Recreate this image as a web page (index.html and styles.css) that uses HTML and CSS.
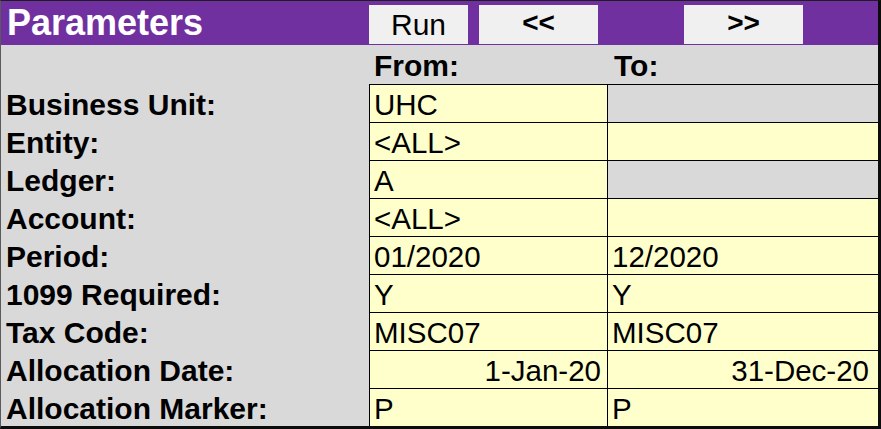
FILE: index.html
```html
<!DOCTYPE html>
<html>
<head>
<meta charset="utf-8">
<link rel="stylesheet" href="styles.css">
</head>
<body>
<div class="sheet">
  <div class="titlebar">
    <div class="title">Parameters</div>
    <button class="btn btn-run">Run</button>
    <button class="btn btn-nav btn-prev">&lt;&lt;</button>
    <button class="btn btn-nav btn-next">&gt;&gt;</button>
  </div>
  <div class="grid">
    <div class="label"></div>
    <div class="colhead colhead-from">From:</div>
    <div class="colhead colhead-to">To:</div>

    <div class="label">Business Unit:</div>
    <div class="cell from">UHC</div>
    <div class="cell to off"></div>

    <div class="label">Entity:</div>
    <div class="cell from">&lt;ALL&gt;</div>
    <div class="cell to"></div>

    <div class="label">Ledger:</div>
    <div class="cell from">A</div>
    <div class="cell to off"></div>

    <div class="label">Account:</div>
    <div class="cell from">&lt;ALL&gt;</div>
    <div class="cell to"></div>

    <div class="label">Period:</div>
    <div class="cell from">01/2020</div>
    <div class="cell to">12/2020</div>

    <div class="label">1099 Required:</div>
    <div class="cell from">Y</div>
    <div class="cell to">Y</div>

    <div class="label">Tax Code:</div>
    <div class="cell from">MISC07</div>
    <div class="cell to">MISC07</div>

    <div class="label">Allocation Date:</div>
    <div class="cell from num">1-Jan-20</div>
    <div class="cell to num">31-Dec-20</div>

    <div class="label">Allocation Marker:</div>
    <div class="cell from">P</div>
    <div class="cell to">P</div>
  </div>
</div>
</body>
</html>
```

FILE: styles.css
```css
html, body {
  margin: 0;
  padding: 0;
  background: #ffffff;
}

body {
  font-family: "Liberation Sans", Arial, sans-serif;
  color: #000;
}

.sheet {
  width: 877px;
  height: 425px;
  border-top: 1px solid #1e1e1e;
  border-left: 1px solid #5a5a5a;
  border-right: 3px solid #0c0c0c;
  border-bottom: 3px solid #0c0c0c;
  background: #d9d9d9;
  overflow: hidden;
}

.titlebar {
  display: flex;
  align-items: flex-start;
  height: 44px;
  background: #7030a0;
  box-sizing: border-box;
  padding-top: 4px;
}

.title {
  width: 368px;
  flex: none;
  box-sizing: border-box;
  padding-left: 6px;
  margin-top: -4px;
  height: 44px;
  line-height: 44px;
  font-size: 36px;
  font-weight: bold;
  color: #ffffff;
  white-space: nowrap;
}

.btn {
  flex: none;
  height: 39px;
  margin: 0;
  padding: 0;
  border: none;
  background: #f0f0f0;
  font-family: "Liberation Sans", Arial, sans-serif;
  color: #000;
  text-align: center;
}

.btn-run {
  width: 99px;
  font-size: 30px;
  line-height: 40px;
}

.btn-nav {
  width: 119px;
  font-size: 28px;
  font-weight: bold;
  line-height: 36px;
  padding-bottom: 3px;
}

.btn-prev {
  margin-left: 11px;
}

.btn-next {
  margin-left: 86px;
}

.grid {
  display: grid;
  grid-template-columns: 368px 238px 271px;
  grid-template-rows: 39px repeat(9, 38px);
}

.label,
.colhead,
.cell {
  display: flex;
  align-items: flex-end;
  box-sizing: border-box;
  line-height: 34px;
  white-space: nowrap;
  overflow: hidden;
}

.label {
  padding-left: 5px;
  font-size: 30px;
  font-weight: bold;
}

.colhead {
  font-size: 30px;
  font-weight: bold;
  padding-bottom: 1px;
}

.colhead-from {
  padding-left: 5px;
}

.colhead-to {
  padding-left: 7px;
}

.cell {
  background: #ffffcc;
  border-top: 1px solid #000;
  border-left: 1px solid #000;
  font-size: 29.5px;
  padding-left: 4px;
}

.cell.off {
  background: #d9d9d9;
}

.cell.num {
  justify-content: flex-end;
  padding-right: 6px;
}

.cell.to.num {
  padding-right: 9px;
}
```
